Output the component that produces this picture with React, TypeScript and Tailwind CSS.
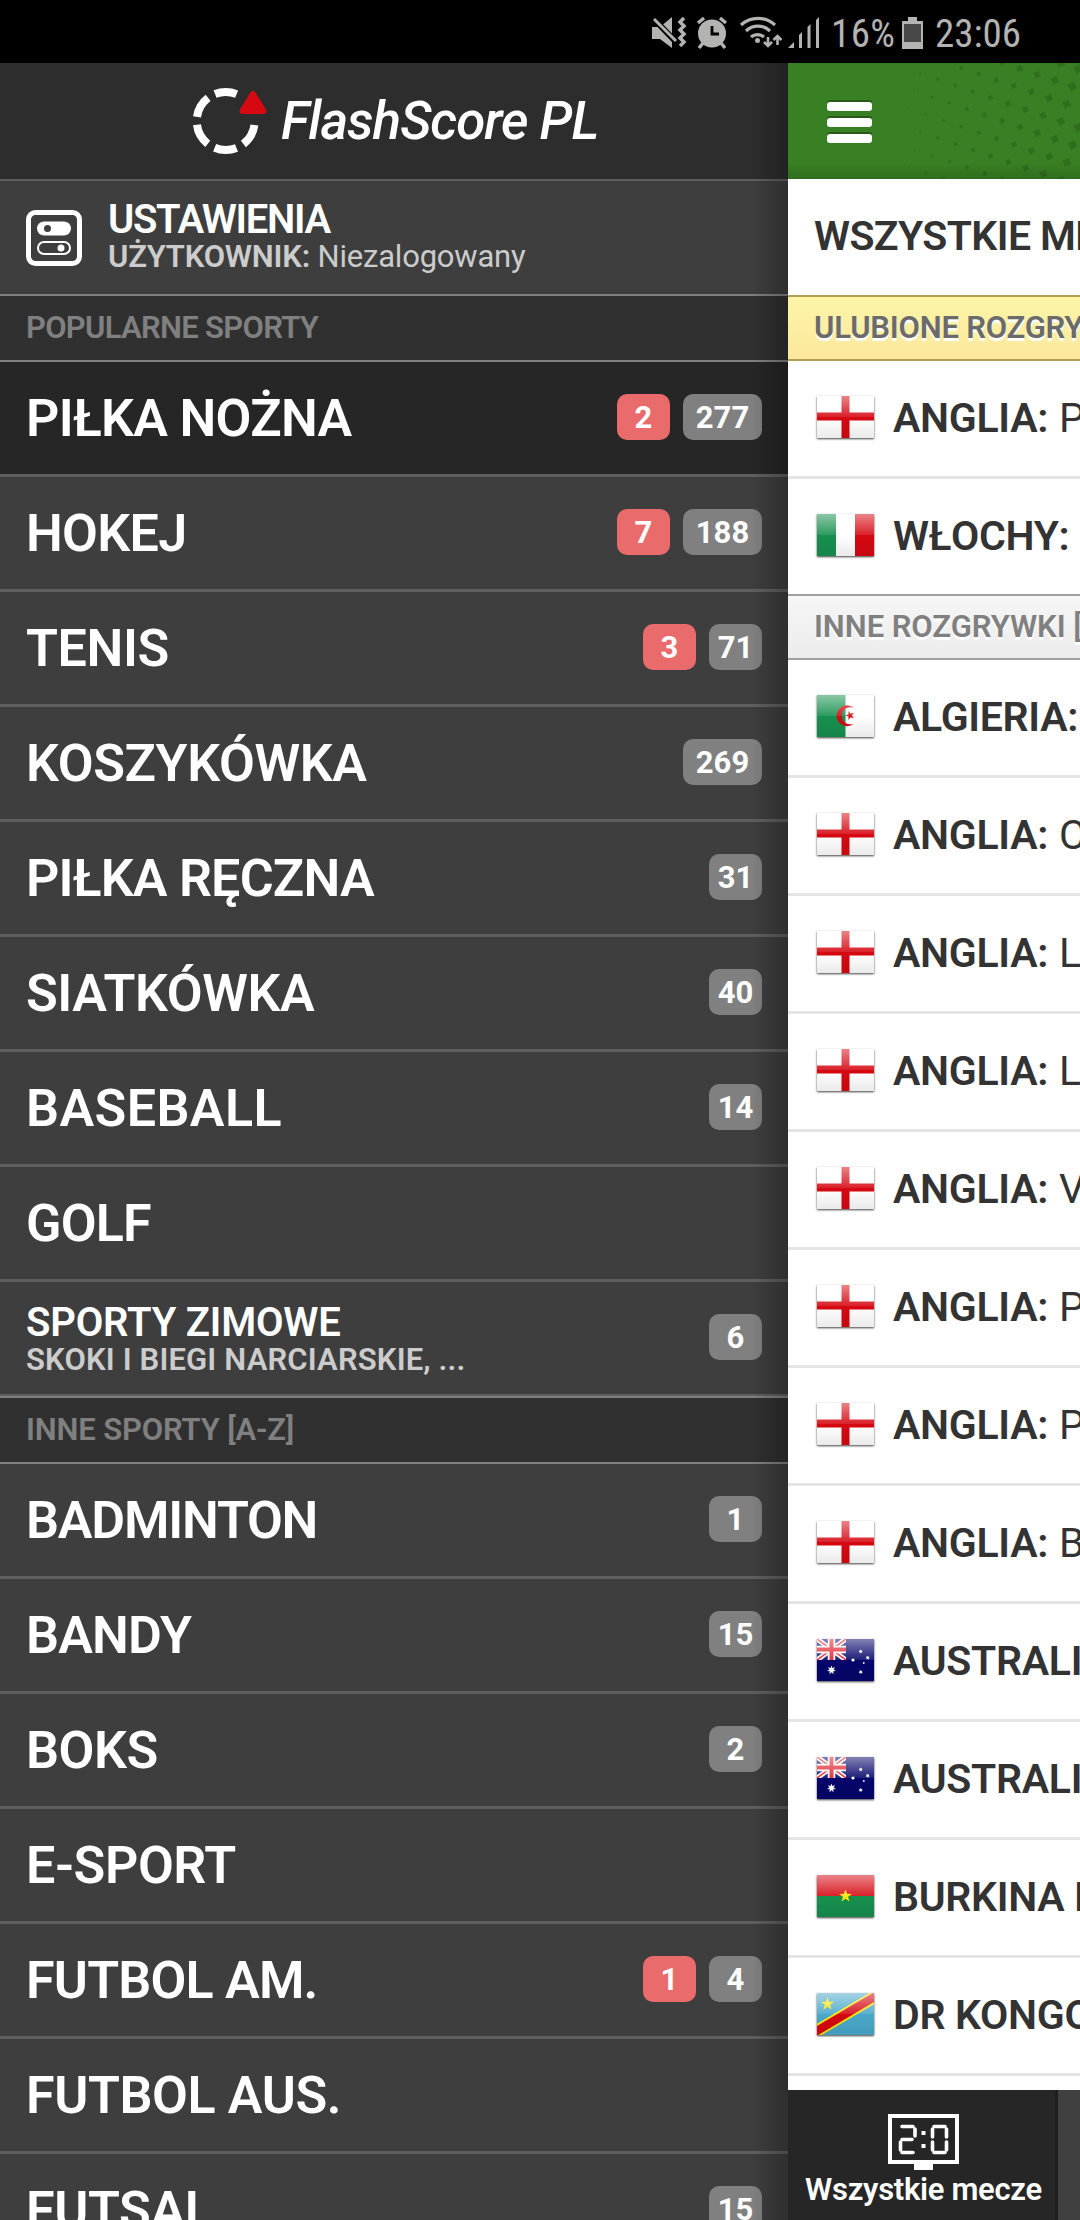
import clsx from "clsx";
import type { ReactNode } from "react";

type Sport = {
  name: string;
  live?: number;
  total?: number;
  active?: boolean;
  tracking?: string;
};

const popularSports: Sport[] = [
  { name: "PIŁKA NOŻNA", live: 2, total: 277, active: true, tracking: "tracking-[-0.7px]" },
  { name: "HOKEJ", live: 7, total: 188, tracking: "tracking-[-0.7px]" },
  { name: "TENIS", live: 3, total: 71 },
  { name: "KOSZYKÓWKA", total: 269 },
  { name: "PIŁKA RĘCZNA", total: 31, tracking: "tracking-[-0.8px]" },
  { name: "SIATKÓWKA", total: 40 },
  { name: "BASEBALL", total: 14, tracking: "tracking-[0.4px]" },
  { name: "GOLF", tracking: "tracking-[-0.8px]" },
];

const otherSports: Sport[] = [
  { name: "BADMINTON", total: 1, tracking: "tracking-[-1.2px]" },
  { name: "BANDY", total: 15, tracking: "tracking-[-0.8px]" },
  { name: "BOKS", total: 2 },
  { name: "E-SPORT" },
  { name: "FUTBOL AM.", live: 1, total: 4, tracking: "tracking-[-0.8px]" },
  { name: "FUTBOL AUS." },
  { name: "FUTSAL", total: 15 },
];

type League = { flag: keyof typeof flags; country: string; name: string };

const favourites: League[] = [
  { flag: "england", country: "ANGLIA:", name: "P" },
  { flag: "italy", country: "WŁOCHY:", name: "" },
];

const leagues: League[] = [
  { flag: "algeria", country: "ALGIERIA:", name: "" },
  { flag: "england", country: "ANGLIA:", name: "C" },
  { flag: "england", country: "ANGLIA:", name: "L" },
  { flag: "england", country: "ANGLIA:", name: "L" },
  { flag: "england", country: "ANGLIA:", name: "V" },
  { flag: "england", country: "ANGLIA:", name: "P" },
  { flag: "england", country: "ANGLIA:", name: "P" },
  { flag: "england", country: "ANGLIA:", name: "B" },
  { flag: "australia", country: "AUSTRALIA:", name: "" },
  { flag: "australia", country: "AUSTRALIA:", name: "" },
  { flag: "burkina", country: "BURKINA FASO:", name: "" },
  { flag: "congo", country: "DR KONGO:", name: "" },
];

// n-pointed star as svg points
function star(cx: number, cy: number, r: number, inner: number, n = 5) {
  return Array.from({ length: n * 2 }, (_, i) => {
    const a = (Math.PI * i) / n - Math.PI / 2;
    const d = i % 2 ? inner : r;
    return `${(cx + d * Math.cos(a)).toFixed(2)},${(cy + d * Math.sin(a)).toFixed(2)}`;
  }).join(" ");
}

const flags = {
  england: (
    <>
      <rect width="57" height="42" fill="#fff" />
      <path d="M28.5 0v42M0 20.5h57" stroke="#d60812" strokeWidth="8" />
    </>
  ),
  italy: (
    <>
      <rect width="57" height="42" fill="#fff" />
      <rect width="19" height="42" fill="#17904f" />
      <rect x="38" width="19" height="42" fill="#d60812" />
    </>
  ),
  algeria: (
    <>
      <rect width="57" height="42" fill="#fff" />
      <rect width="28.5" height="42" fill="#17904f" />
      <path d="M37 13a10.4 10.4 0 1 0 0 15.5a8.6 8.6 0 1 1 0-15.5z" fill="#d60812" />
      <polygon points={star(33, 20.5, 4.8, 1.9)} transform="rotate(-18 33 20.5)" fill="#d60812" />
    </>
  ),
  australia: (
    <>
      <rect width="57" height="42" fill="#05056b" />
      <svg width="29" height="21">
        <path d="M0 0l29 21M29 0L0 21" stroke="#fff" strokeWidth="5" />
        <path d="M0 0l29 21M29 0L0 21" stroke="#e0202c" strokeWidth="1.6" />
        <path d="M14.5 0v21M0 10.5h29" stroke="#fff" strokeWidth="7.5" />
        <path d="M14.5 0v21M0 10.5h29" stroke="#e0202c" strokeWidth="4" />
      </svg>
      <polygon points={star(14.5, 31, 4.6, 2.2, 7)} fill="#fff" />
      <polygon points={star(43.7, 12.5, 2.2, 1.1, 7)} fill="#fff" />
      <polygon points={star(36, 21, 2.2, 1.1, 7)} fill="#fff" />
      <polygon points={star(50.7, 18.7, 2.2, 1.1, 7)} fill="#fff" />
      <polygon points={star(43.7, 33, 2.2, 1.1, 7)} fill="#fff" />
      <circle cx="46.8" cy="24" r="0.9" fill="#fff" />
    </>
  ),
  burkina: (
    <>
      <rect width="57" height="21" fill="#d60812" />
      <rect y="21" width="57" height="21" fill="#17904f" />
      <polygon points={star(28.5, 21, 6.8, 2.7)} fill="#fbe50a" />
    </>
  ),
  congo: (
    <>
      <rect width="57" height="42" fill="#4aa8ca" />
      <path d="M-2 39L59 3" stroke="#fbe50a" strokeWidth="12" />
      <path d="M-2 39L59 3" stroke="#d60812" strokeWidth="8.5" />
      <polygon points={star(10.5, 11, 7, 2.8)} fill="#fbe50a" />
    </>
  ),
};

function Flag({ code }: { code: keyof typeof flags }) {
  return (
    <div className="relative -mt-[3px] h-[42px] w-[57px] shrink-0 shadow-[0_1px_2px_rgba(0,0,0,0.75)]">
      <svg width="57" height="42" viewBox="0 0 57 42" className="block overflow-hidden">
        {flags[code]}
      </svg>
      {/* gloss */}
      <div className="absolute inset-x-0 top-0 h-1/2 bg-linear-to-b from-white/50 to-white/10" />
      <div className="absolute inset-x-0 bottom-0 h-1/2 bg-linear-to-b from-black/0 to-black/8" />
    </div>
  );
}

function StatusBar() {
  return (
    <div className="flex h-[63px] items-center bg-black pl-[650px] text-[#b3b3b1]">
      <svg width="172" height="36" viewBox="650 14 172 36" fill="none" stroke="currentColor">
        {/* muted + vibrate */}
        <path d="M652 27h8l12-10v31l-12-9h-8z" fill="currentColor" stroke="none" />
        <path d="M652 17l25 26" stroke="#000" strokeWidth="6" />
        <path d="M654 19l22 22" strokeWidth="3" />
        <path d="M684 18l-4 4 4 4-4 4 4 4-4 4 4 4-4 4" strokeWidth="3.5" />
        {/* alarm */}
        <circle cx="712" cy="33.5" r="14" fill="currentColor" stroke="none" />
        <path d="M698 23l6-5M726 23l-6-5M703 43l-4 5M721 43l4 5" strokeWidth="3.5" />
        <path d="M712 26v8h7" stroke="#000" strokeWidth="2.8" />
        {/* wifi */}
        <path d="M741 25a25 25 0 0 1 34 0M746 31a17 17 0 0 1 24 0M751 37a10 10 0 0 1 13 0" strokeWidth="3.2" />
        <circle cx="757.5" cy="40.5" r="2.5" fill="currentColor" stroke="none" />
        <path d="M768 37v9M764 42l4 4 4-4M777.5 45v-9M773.5 40l4-4 4 4" strokeWidth="2.6" />
        {/* signal */}
        <path d="M788 48l6-6v6z" fill="currentColor" stroke="none" />
        <path d="M799 48v-13l3-3v16zM807.5 48V27l3-3v24zM816 48V20l3-3v31z" fill="currentColor" stroke="none" />
      </svg>
      <span className="mt-1.5 ml-[9px] w-[61px] font-['Roboto_Condensed'] text-[39px] leading-none tracking-[0.4px] whitespace-nowrap">
        16%
      </span>
      <svg width="21" height="32" viewBox="0 0 21 32" className="mt-0.5 ml-[10px]">
        <path d="M6 0h9v4h6v28H0V4h6z" fill="currentColor" />
        <rect x="2" y="7" width="17" height="18" fill="#484848" />
      </svg>
      <span className="mt-1.5 ml-3 font-['Roboto_Condensed'] text-[39px] leading-none">23:06</span>
    </div>
  );
}

function Badge({ live, count }: { live?: boolean; count: number }) {
  return (
    <span
      className={clsx(
        "flex h-[46px] items-center justify-center rounded-[10px] text-[31px] leading-none font-bold",
        count > 99 ? "w-[79px]" : "w-[53px]",
        live ? "bg-[#e96b6b]" : "bg-[#808080]"
      )}
    >
      {count}
    </span>
  );
}

function SectionTitle({ className, children }: { className?: string; children: ReactNode }) {
  return (
    <h2
      className={clsx(
        "flex h-[66px] items-center border-b-2 border-[#808080] bg-[#303030] px-[26px] text-[31px] font-semibold text-[#808080]",
        className
      )}
    >
      {children}
    </h2>
  );
}

function SportRow({ sport }: { sport: Sport }) {
  return (
    <li
      className={clsx(
        "flex h-[115px] items-center justify-between border-b-[3px] border-[#5f5f5f] px-[26px]",
        sport.active && "bg-[#262626]"
      )}
    >
      <span className={clsx("pt-0.5 text-[52px] font-semibold", sport.tracking ?? "tracking-[-0.4px]")}>
        {sport.name}
      </span>
      <div className="flex gap-[13px] pb-0.5">
        {sport.live && <Badge live count={sport.live} />}
        {sport.total && <Badge count={sport.total} />}
      </div>
    </li>
  );
}

function Logo() {
  return (
    <div className="flex h-[116px] items-center bg-[#2d2d2d] pl-[190px]">
      <svg width="80" height="72" viewBox="190 85 80 72" fill="none">
        <circle
          cx="225.7"
          cy="121"
          r="29"
          stroke="#fff"
          strokeWidth="8"
          strokeDasharray="22.4 7.97"
          strokeDashoffset="11.2"
          transform="rotate(-90 225.7 121)"
        />
        <rect x="240" y="88" width="30" height="31" fill="#2d2d2d" />
        <path d="M253 94l10.5 17h-21z" fill="#d60812" stroke="#d60812" strokeWidth="6" strokeLinejoin="round" />
      </svg>
      <h1 className="ml-[11px] text-[53px] leading-none font-medium tracking-[-1px] italic">FlashScore PL</h1>
    </div>
  );
}

function Drawer() {
  return (
    <aside className="relative h-[2157px] w-[788px] shrink-0 overflow-hidden bg-[#3e3e3e] text-white">
      <Logo />
      <div className="flex h-[117px] items-center gap-[26px] border-y-2 border-t-[#5f5f5f] border-b-[#808080] px-[26px]">
        <svg width="56" height="56" viewBox="0 0 56 56" fill="none">
          <rect x="2.5" y="2.5" width="51" height="51" rx="7" stroke="#fff" strokeWidth="5" />
          <rect x="11" y="11.5" width="34" height="14" rx="7" fill="#fff" />
          <circle cx="21.5" cy="18.5" r="3.5" fill="#3e3e3e" />
          <rect x="12" y="32" width="32" height="12" rx="6" stroke="#fff" strokeWidth="2" />
          <circle cx="35" cy="38" r="3.5" fill="#fff" />
        </svg>
        <div>
          <p className="text-[40px] leading-[38px] font-semibold tracking-[-1.3px]">USTAWIENIA</p>
          <p className="text-[31px] leading-[36px] tracking-[-0.2px] text-[#cccccc]">
            <span className="font-semibold">UŻYTKOWNIK:</span> Niezalogowany
          </p>
        </div>
      </div>
      <SectionTitle className="tracking-[-0.7px]">POPULARNE SPORTY</SectionTitle>
      <ul>
        {popularSports.map((s) => (
          <SportRow key={s.name} sport={s} />
        ))}
      </ul>
      <div className="flex h-[114px] items-center justify-between border-b-2 border-[#5f5f5f] px-[26px]">
        <div className="pt-1.5">
          <p className="text-[40px] leading-[38px] font-semibold tracking-[-0.2px]">SPORTY ZIMOWE</p>
          <p className="text-[31px] leading-[36px] font-semibold tracking-[0.15px] text-[#cccccc]">
            SKOKI I BIEGI NARCIARSKIE, ...
          </p>
        </div>
        <div className="pb-0.5">
          <Badge count={6} />
        </div>
      </div>
      <div className="border-t-2 border-[#808080]">
        <SectionTitle className="tracking-[-0.15px]">INNE SPORTY [A-Z]</SectionTitle>
      </div>
      <ul>
        {otherSports.map((s) => (
          <SportRow key={s.name} sport={s} />
        ))}
      </ul>
      {/* shadow cast by the content panel */}
      <div className="absolute inset-y-0 right-0 w-9 bg-linear-to-r from-black/0 to-black/25" />
    </aside>
  );
}

function LeagueRow({ league }: { league: League }) {
  return (
    <li className="flex h-[118px] items-center border-b-[3px] border-[#e5e5e5] pl-[29px] text-[41px] whitespace-nowrap">
      <Flag code={league.flag} />
      <span className="ml-[19px] font-semibold tracking-[-0.3px]">{league.country}</span>
      <span className="ml-[11px]">{league.name}</span>
    </li>
  );
}

// halftone dots that grow towards the right edge
function Halftone() {
  const dots: ReactNode[] = [];
  for (let i = -4; i < 12; i++) {
    for (let j = -6; j < 9; j++) {
      const x = 173 + i * 17.6 - j * 5.8;
      const y = 5 + i * 6 + j * 17.5;
      if (x < 118 || x > 296 || y < -5 || y > 118) continue;
      const r = 1 + (x - 118) * 0.026;
      dots.push(<polygon key={`${i}:${j}`} points={star(x, y, r, r * 0.6, 4)} transform={`rotate(20 ${x} ${y})`} />);
    }
  }
  return (
    <svg width="292" height="116" className="absolute inset-0" fill="#2f6e1e">
      {dots}
    </svg>
  );
}

function ScoreboardIcon() {
  return (
    <svg width="71" height="56" viewBox="0 0 71 56" fill="none" stroke="#fff">
      <rect x="2" y="2" width="67" height="46" strokeWidth="4" />
      <rect x="26" y="49" width="19" height="7" fill="#fff" stroke="none" />
      <path
        d="M14 12.5h11M27 15v7M14 25.5h10M12.5 28v8M14 38.5h11M46 12.5h11M44.5 15v8M58.5 15v8M44.5 28v8M58.5 28v8M46 38.5h11"
        strokeWidth="3.6"
        strokeLinecap="round"
      />
      <path d="M33.5 19h4M33.5 32h4" strokeWidth="4" />
    </svg>
  );
}

function Content() {
  return (
    <main className="flex h-[2157px] w-[292px] flex-col overflow-hidden bg-white text-[#333333]">
      <header className="relative h-[116px] shrink-0 overflow-hidden bg-[#388023]">
        <Halftone />
        <div className="absolute inset-x-0 bottom-0 h-4 bg-linear-to-b from-black/0 to-black/15" />
        <div className="relative ml-[39px] flex w-[45px] flex-col gap-[7px] pt-[39px]">
          <span className="h-[9px] rounded-[3px] bg-white shadow-[0_-2px_0_#29591b]" />
          <span className="h-[9px] rounded-[3px] bg-white shadow-[0_-2px_0_#29591b]" />
          <span className="h-[9px] rounded-[3px] bg-white shadow-[0_-2px_0_#29591b]" />
        </div>
      </header>
      <div className="flex h-[116px] shrink-0 items-center pl-[26px] text-[41px] font-semibold tracking-[-0.6px] whitespace-nowrap">
        WSZYSTKIE MECZE
      </div>
      <h2 className="flex h-[66px] shrink-0 items-center border-y-2 border-[#b3a04e] bg-linear-to-b from-[#fcf5a8] to-[#fbe89c] pl-[26px] text-[31px] font-semibold tracking-[-0.2px] whitespace-nowrap text-[#6b6b6b] [text-shadow:0_3px_1px_#fff]">
        ULUBIONE ROZGRYWKI
      </h2>
      <ul>
        {favourites.map((l) => (
          <LeagueRow key={l.country} league={l} />
        ))}
      </ul>
      <h2 className="-mt-[3px] flex h-[66px] shrink-0 items-center border-y-2 border-[#a0a0a0] bg-linear-to-b from-[#f6f6f6] to-[#ececec] pl-[26px] text-[31px] font-semibold tracking-[-0.05px] whitespace-nowrap text-[#808080] [text-shadow:0_3px_1px_#fff]">
        INNE ROZGRYWKI [A-Z]
      </h2>
      <ul className="min-h-0 flex-1 overflow-hidden">
        {leagues.map((l, i) => (
          <LeagueRow key={i} league={l} />
        ))}
      </ul>
      <nav className="flex h-[130px] shrink-0 bg-[#404040] text-white">
        <div className="flex w-[270px] flex-col items-center border-r-[3px] border-[#1f1f1f] bg-[#262626] pt-6 pl-1">
          <ScoreboardIcon />
          <span className="mt-[2px] text-[31px] leading-[36px] font-semibold tracking-[-0.3px] whitespace-nowrap">
            Wszystkie mecze
          </span>
        </div>
      </nav>
    </main>
  );
}

export default function App() {
  return (
    <div className="h-[2220px] w-[1080px] overflow-hidden bg-black font-['Roboto','Liberation_Sans',sans-serif]">
      <StatusBar />
      <div className="flex">
        <Drawer />
        <Content />
      </div>
    </div>
  );
}
